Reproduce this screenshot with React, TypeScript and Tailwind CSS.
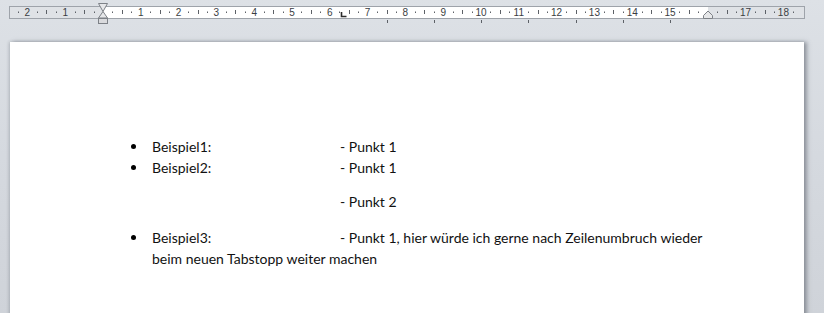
import React from "react";

const ZERO = 103;
const CM = 37.8;

function Ruler() {
  const nums: number[] = [];
  for (let n = -2; n <= 18; n++) nums.push(n);
  const ticks: { x: number; kind: "dot" | "half" }[] = [];
  for (let q = -9; q <= 18 * 4 + 3; q++) {
    if (q % 4 === 0) continue;
    const x = ZERO + (q / 4) * CM;
    if (x < 12 || x > 800) continue;
    if (Math.abs(x - 708) < 4) continue;
    ticks.push({ x, kind: q % 2 === 0 ? "half" : "dot" });
  }
  const tabs = [386.5, 434, 481, 528, 575.5, 623, 670];
  return (
    <svg width="824" height="26" className="block">
      {/* ruler strip */}
      <rect x="9.5" y="6.5" width="795" height="12" fill="#dfe2e6" stroke="#9ea3aa" />
      <rect x="103" y="7" width="605" height="11" fill="#ffffff" />
      {ticks.map((t, i) =>
        t.kind === "half" ? (
          <rect key={i} x={Math.round(t.x)} y="10" width="1" height="4" fill="#5d6167" />
        ) : (
          <rect key={i} x={Math.round(t.x)} y="11.5" width="1" height="1.5" fill="#5d6167" />
        )
      )}
      {nums
        .filter((n) => n !== 0 && n !== 16)
        .map((n) => (
          <text
            key={n}
            x={ZERO + n * CM}
            y="16"
            textAnchor="middle"
            fontSize="10"
            fontFamily="'Liberation Sans', Arial, sans-serif"
            fill="#3a3d42"
          >
            {Math.abs(n)}
          </text>
        ))}
      {/* default tab stops */}
      {tabs.map((x) => (
        <rect key={x} x={Math.round(x)} y="20" width="1" height="3" fill="#5d6167" />
      ))}
      {/* left tab marker */}
      <path d="M341.5 12v4.5h5" stroke="#2b2b2b" strokeWidth="1.6" fill="none" />
      {/* hanging indent marker */}
      <path d="M98.5 3.5h9l-4.5 8z" fill="#e6e7e9" stroke="#7d8187" />
      <path d="M103 11.5l4.5 6.5h-9z" fill="#e6e7e9" stroke="#7d8187" />
      <rect x="98.5" y="18.5" width="9" height="5" fill="#d9dadd" stroke="#7d8187" />
      {/* right indent marker */}
      <path d="M703.5 18.5v-3l4.5-4.5 4.5 4.5v3z" fill="#e6e7e9" stroke="#7d8187" />
    </svg>
  );
}

function Item({ label, text }: { label: string; text: React.ReactNode }) {
  return (
    <div className="flex">
      <div className="w-[42px] flex justify-end pr-[16px] pt-[8px]">
        <span className="block w-[5px] h-[5px] rounded-full bg-black" />
      </div>
      <div className="flex-1">
        <span className="inline-block w-[188px]">{label}</span>
        {text}
      </div>
    </div>
  );
}

export default function App() {
  return (
    <div className="w-[824px] h-[313px] overflow-hidden bg-gradient-to-b from-[#dde1e6] via-[#d5d9df] to-[#cfd3d9]">
      <Ruler />
      <div className="h-[16px]" />
      <div
        className="ml-[10px] w-[794px] h-[300px] bg-white shadow-[3px_0_4px_rgba(90,95,105,0.55),-1px_0_3px_rgba(90,95,105,0.3)] pl-[100px] pt-[94px] text-[14px] leading-[21px] text-[#111]"
        style={{ fontFamily: "Lato, 'Open Sans', sans-serif" }}
      >
        <Item label="Beispiel1:" text="- Punkt 1" />
        <Item label="Beispiel2:" text="- Punkt 1" />
        <div className="pl-[42px] pt-[13px]">
          <span className="inline-block w-[188px]" />- Punkt 2
        </div>
        <div className="pt-[15px]">
          <Item
            label="Beispiel3:"
            text={
              <>
                - Punkt 1, hier würde ich gerne nach Zeilenumbruch wieder
                <br />
                beim neuen Tabstopp weiter machen
              </>
            }
          />
        </div>
      </div>
    </div>
  );
}
